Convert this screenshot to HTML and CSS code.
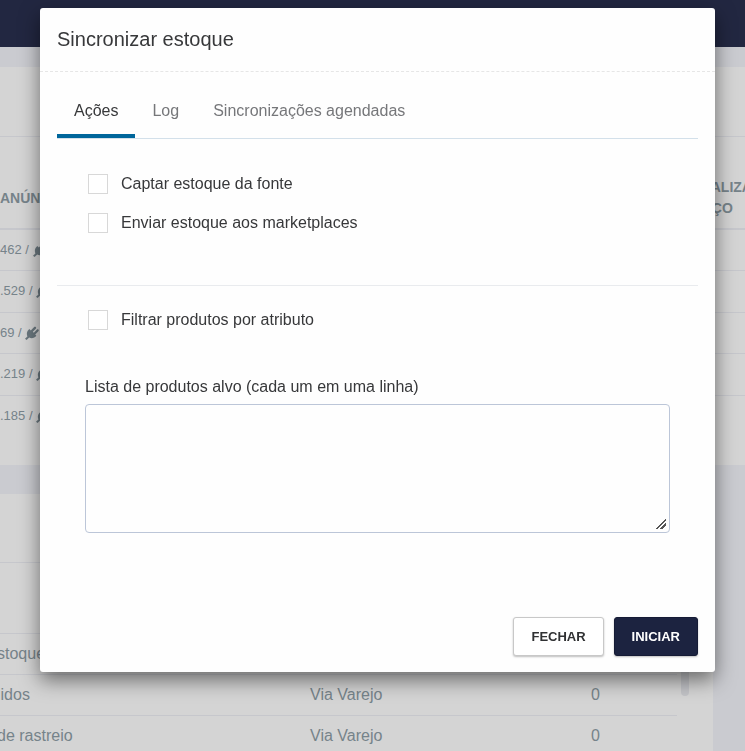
FILE: index.html
```html
<!DOCTYPE html>
<html lang="pt-br">
<head>
  <meta charset="UTF-8" />
  <title>Sincronizar estoque</title>
  <meta name="viewport" content="width=device-width, initial-scale=1" />
  <link rel="stylesheet" href="styles.css">
</head>
<body>
  <svg class="icones" aria-hidden="true">
    <symbol id="plug" viewBox="0 0 14 14">
      <path d="M0 12.8 2.4 10.4C1.4 8 1.8 5.6 3.4 4L4.4 3 5.8 4.4 9.4 .8C10.4 .2 11.6 1.4 11 2.4L7.8 5.8 8.8 6.8 12 3.4C13 2.8 14.2 4 13.6 5L10.2 8.6 11.4 9.8C9.6 12.2 6.6 12.8 4.2 11.6L1.6 14Z" />
    </symbol>
  </svg>

  <header class="topo"></header>

  <main class="pagina">
    <section class="painel painel-anuncios">
      <div class="painel-titulo"></div>
      <table class="anuncios">
        <thead>
          <tr>
            <th>ANÚNCIOS</th>
            <th class="col-preco">ATUALIZAÇÃO<br>PREÇO</th>
          </tr>
        </thead>
        <tbody>
          <tr><td>462 / <svg class="plug"><use href="#plug" /></svg></td><td></td></tr>
          <tr><td>.529 / <svg class="plug"><use href="#plug" /></svg></td><td></td></tr>
          <tr><td>69 / <svg class="plug"><use href="#plug" /></svg></td><td></td></tr>
          <tr><td>.219 / <svg class="plug"><use href="#plug" /></svg></td><td></td></tr>
          <tr><td>.185 / <svg class="plug"><use href="#plug" /></svg></td><td></td></tr>
        </tbody>
      </table>
    </section>

    <section class="painel painel-tarefas">
      <div class="painel-titulo"></div>
      <div class="rolagem">
        <table class="tarefas">
          <thead>
            <tr><th></th><th></th><th></th></tr>
          </thead>
          <tbody>
            <tr><td>stoque</td><td>Via Varejo</td><td>0</td></tr>
            <tr><td>lidos</td><td>Via Varejo</td><td>0</td></tr>
            <tr><td>de rastreio</td><td>Via Varejo</td><td>0</td></tr>
          </tbody>
        </table>
        <div class="barra"></div>
      </div>
    </section>
  </main>

  <div class="fundo-modal">
    <div class="modal" role="dialog" aria-labelledby="titulo">
      <div class="modal-titulo">
        <h1 id="titulo">Sincronizar estoque</h1>
      </div>

      <div class="modal-corpo">
        <nav class="abas">
          <a href="#acoes" class="ativa">Ações</a>
          <a href="#log">Log</a>
          <a href="#agendadas">Sincronizações agendadas</a>
        </nav>

        <form id="acoes">
          <div class="grupo">
            <label class="opcao"><input type="checkbox" name="captar" />Captar estoque da fonte</label>
            <label class="opcao"><input type="checkbox" name="enviar" />Enviar estoque aos marketplaces</label>
          </div>
          <div class="grupo grupo-filtro">
            <label class="opcao"><input type="checkbox" name="filtrar" />Filtrar produtos por atributo</label>
            <label class="rotulo" for="produtos">Lista de produtos alvo (cada um em uma linha)</label>
            <textarea id="produtos"></textarea>
          </div>
        </form>
      </div>

      <div class="modal-rodape">
        <button type="button" class="botao">FECHAR</button>
        <button type="submit" form="acoes" class="botao primario">INICIAR</button>
      </div>
    </div>
  </div>
</body>
</html>
```

FILE: styles.css
```css
* {
  box-sizing: border-box;
}
html, body {
  height: 100%;
}
body {
  margin: 0;
  font-family: "Liberation Sans", Arial, sans-serif;
  font-size: 16px;
  line-height: 20px;
  background: #cacbd0;
  color: #76838a;
  overflow: hidden;
}
.icones {
  display: none;
}

/* página atrás do modal */
.topo {
  height: 47px;
  background: #222741;
}
.pagina {
  padding-top: 20px;
}
.painel {
  background: #d4d4d4;
}
.painel-titulo {
  height: 70px;
  border-bottom: 1px solid #c6c7cc;
}
.painel-anuncios {
  height: 398px;
  margin-bottom: 29px;
  overflow: hidden;
}
.painel-tarefas {
  margin-right: 32px;
}
.painel-tarefas .painel-titulo {
  height: 69px;
}
table {
  width: 100%;
  table-layout: fixed;
  border-collapse: collapse;
}
th, td {
  padding: 0;
  text-align: left;
}
.anuncios {
  font-size: 13px;
}
.anuncios th {
  height: 92px;
  padding-top: 31px;
  font-size: 14px;
  line-height: 21px;
  border-bottom: 2px solid #c6c7cc;
}
.anuncios .col-preco {
  width: 62px;
}
.anuncios td {
  height: 42px;
  border-bottom: 1px solid #c6c7cc;
}
.anuncios tr:nth-child(odd) td {
  height: 41px;
}
.anuncios tr:last-child td {
  border-bottom: none;
}
.plug {
  width: 14px;
  height: 14px;
  fill: #6b787f;
  vertical-align: text-bottom;
}
.rolagem {
  display: flex;
  align-items: flex-start;
  padding-right: 24px;
}
.barra {
  flex: none;
  width: 8px;
  height: 133px;
  margin-left: 4px;
  border-radius: 4px;
  background: #c3c4c8;
}
.tarefas th {
  height: 70px;
}
.tarefas th:first-child {
  width: 310px;
}
.tarefas th:last-child {
  width: 86px;
}
.tarefas td {
  height: 41px;
  border-top: 1px solid #c6c7cc;
}
.tarefas td:first-child {
  text-indent: -3px;
}

/* modal */
.fundo-modal {
  position: fixed;
  inset: 0;
  padding: 8px 30px 8px 40px;
}
.modal {
  background: #fefefe;
  color: #37383a;
  border-radius: 3px;
  box-shadow: 0 8px 20px rgba(0, 0, 0, 0.5);
}
.modal-titulo {
  padding: 21px 17px 22px;
  border-bottom: 1px dashed #e6e6e6;
}
.modal-titulo h1 {
  margin: 0;
  font-size: 20px;
  line-height: 20px;
  font-weight: normal;
}
.modal-corpo {
  padding: 17px 17px 0;
}
.abas {
  display: flex;
  border-bottom: 1px solid #d3e0ea;
}
.abas a {
  padding: 12px 17px 13px;
  border-bottom: 4px solid transparent;
  color: #76777a;
  text-decoration: none;
}
.abas .ativa {
  color: #37383a;
  border-bottom-color: #00669b;
}
.grupo {
  padding: 35px 28px 52px;
  border-bottom: 1px solid #e9ebee;
}
.grupo-filtro {
  padding-top: 24px;
  padding-bottom: 0;
  border-bottom: none;
}
.opcao {
  display: flex;
  align-items: center;
  gap: 13px;
  padding-left: 3px;
}
.opcao + .opcao {
  margin-top: 19px;
}
.opcao input {
  appearance: none;
  width: 20px;
  height: 20px;
  margin: 0;
  border: 1px solid #d8d8d8;
  background: #fff;
}
.opcao input:checked {
  background: #00669b;
}
.rotulo {
  display: block;
  margin-top: 47px;
}
textarea {
  display: block;
  width: 100%;
  height: 129px;
  margin-top: 7px;
  padding: 8px 12px;
  border: 1px solid #bcc6d8;
  border-radius: 4px;
  background: #fefefe;
  font: inherit;
  resize: vertical;
}
textarea::-webkit-resizer {
  background: linear-gradient(135deg, transparent 46%, #555 46%, #555 57%, transparent 57%, transparent 70%, #555 70%, #555 81%, transparent 81%) 2px 2px / 10px 10px no-repeat;
}
textarea:focus {
  border-color: #00669b;
  outline: none;
}
.modal-rodape {
  display: flex;
  justify-content: flex-end;
  gap: 10px;
  padding: 84px 17px 16px;
}
.botao {
  height: 39px;
  padding: 0 17px;
  border: 1px solid #c8c8c8;
  border-radius: 3px;
  background: #fff;
  color: #303133;
  font: bold 13px "Liberation Sans", Arial, sans-serif;
  box-shadow: 0 1px 2px rgba(0, 0, 0, 0.25);
  cursor: pointer;
}
.botao.primario {
  border-color: #151b35;
  background: #1c2340;
  color: #fff;
}
```
